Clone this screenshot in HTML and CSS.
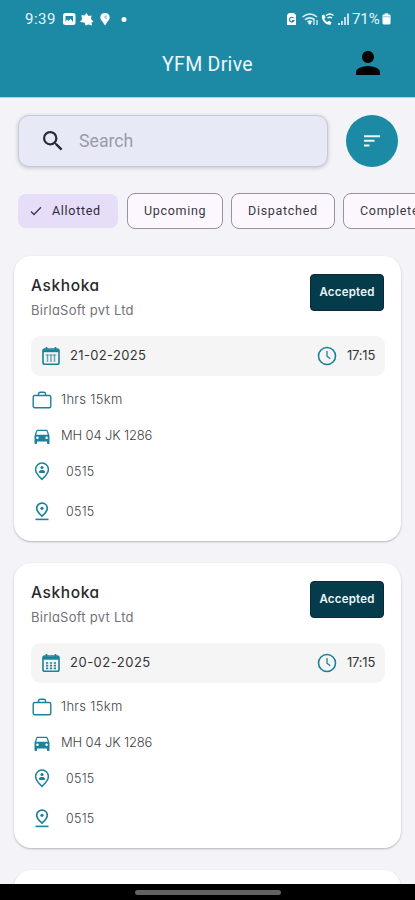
FILE: index.html
```html
<!DOCTYPE html>
<html lang="en">
<head>
<meta charset="utf-8">
<title>YFM Drive</title>
<link rel="stylesheet" href="styles.css">
</head>
<body>
<svg class="defs" aria-hidden="true">
  <symbol id="calendar" viewBox="0 0 18 18"><path d="M4.500 0v3M13.500 0v3" stroke="currentColor" stroke-width="1.700"/><rect x="1" y="2" width="16" height="15.200" rx="1.800" fill="none" stroke="currentColor" stroke-width="1.600"/><path d="M1 2.500h16v3.200H1z" fill="currentColor"/><path d="M4 9h10M4 11.700h10M4 14.400h10" stroke="currentColor" stroke-width="1.700" stroke-dasharray="2.200 1.700"/></symbol>
  <symbol id="calendar-bars" viewBox="0 0 18 18"><path d="M4.500 0v3M13.500 0v3" stroke="currentColor" stroke-width="1.700"/><rect x="1" y="2" width="16" height="15.200" rx="1.800" fill="none" stroke="currentColor" stroke-width="1.600"/><path d="M1 2.500h16v2.700H1z" fill="currentColor"/><path d="M5.500 7.500v7.500M9 7.500v7.500M12.500 7.500v7.500" stroke="currentColor" stroke-width="1.500" opacity=".65"/><path d="M3.500 8h11" stroke="currentColor" stroke-width="1" opacity=".65"/></symbol>
  <symbol id="clock" viewBox="0 0 20 20"><circle cx="10" cy="10" r="8.500" fill="none" stroke="currentColor" stroke-width="1.600"/><path d="M10 5v5.200l3.300 2.600" fill="none" stroke="currentColor" stroke-width="1.300"/></symbol>
  <symbol id="case" viewBox="0 0 20 18"><rect x="1.200" y="4.500" width="17.600" height="12.300" rx="1.500" fill="none" stroke="currentColor" stroke-width="1.400"/><path d="M6.500 4.500V3q0-1.700 1.700-1.700h3.600q1.700 0 1.700 1.700v1.500" fill="none" stroke="currentColor" stroke-width="1.400"/></symbol>
  <symbol id="car" viewBox="0 0 24 24"><path fill="currentColor" d="M18.920 5.010C18.720 4.420 18.160 4 17.500 4h-11c-.66 0-1.210.42-1.420 1.010L3 11v9c0 .55.450 1 1 1h1c.55 0 1-.45 1-1v-2h12v2c0 .55.450 1 1 1h1c.55 0 1-.45 1-1v-9l-2.080-5.990zM6.500 15c-.83 0-1.500-.67-1.500-1.500S5.670 12 6.500 12s1.500.67 1.500 1.500S7.330 15 6.500 15zm11 0c-.83 0-1.500-.67-1.500-1.500s.67-1.500 1.500-1.500 1.500.67 1.500 1.500-.67 1.500-1.500 1.500zM5 10l1.500-4.500h11L19 10H5z"/></symbol>
  <symbol id="pickup" viewBox="0 0 16 19"><path d="M8 1.100c3.700 0 6.400 2.900 6.400 6.500 0 3-2.200 6-6.400 9.800C3.800 13.600 1.600 10.600 1.600 7.600 1.600 4 4.300 1.100 8 1.100z" fill="none" stroke="currentColor" stroke-width="1.500"/><circle cx="8" cy="5.500" r="1.600" fill="currentColor"/><path d="M4.700 10.200c0-1.800 2.200-2.300 3.300-2.300s3.300.5 3.300 2.300C10.100 11.400 5.900 11.400 4.700 10.200z" fill="currentColor"/></symbol>
  <symbol id="drop" viewBox="0 0 16 19"><path d="M8 1.100c3 0 5.300 2.300 5.300 5.200 0 2.500-1.800 4.900-5.300 7.900-3.500-3-5.300-5.400-5.300-7.900C2.700 3.400 5 1.100 8 1.100z" fill="none" stroke="currentColor" stroke-width="1.700"/><circle cx="8" cy="6.300" r="1.600" fill="currentColor"/><path d="M1.500 17.400h13" stroke="currentColor" stroke-width="1.600"/></symbol>
</svg>
<div class="screen">
  <header class="header">
    <div class="status">
      <span class="time">9:39</span>
      <svg class="s-left" viewBox="0 0 68 16">
        <rect x="1" y="2" width="12.500" height="12" rx="2.500" fill="#fff"/><path d="M3.500 11V5h7.500v6L8.500 7.800 6.500 10 5 8.500z" fill="#1c8aa5"/>
        <path d="M18 11l2-2.500-.5-4.500 3 .5 2-2.500 2 3 3-.5-.5 3.500 2.500 2.500-2 1 .5 3-3.500-1-3 1-1-3z" fill="#fff"/>
        <path d="M43 2c3 0 4.700 2 4.700 4.600 0 2.200-1.700 3.200-2.700 5L43 14.500l-2-2.900c-1-1.800-2.700-2.800-2.700-5C38.300 4 40 2 43 2z" fill="#fff"/><path d="M45 5.200h-2v2h2" fill="none" stroke="#7bbccb"/>
        <circle cx="62" cy="8.500" r="2.500" fill="#fff"/>
      </svg>
      <svg class="s-right" viewBox="0 0 66 16">
        <path d="M3 2h5l2 2v10H1V4z" fill="#fff"/><path d="M7.500 7a2.300 2.300 0 1 0 .3 2.700H6" fill="none" stroke="#1c8aa5" stroke-width="1.200"/>
        <g fill="none" stroke="#dceff4" stroke-width="1.600"><path d="M16.500 6q7.500-6 14.500 0M19 8.700q5-3.700 9.500 0M21.500 11q2.400-1.700 4.500 0"/><path d="M28 8v6M31 14v-5" stroke-width="1.300"/></g><circle cx="23.800" cy="12.300" r="1.300" fill="#fff"/>
        <path d="M36 4.200l2-.7 1.600 3-1.300 1.300c.6 1.500 1.800 2.600 3.200 3.200l1.500-1.200 2.500 1.700-1 2.200C40 14.500 34.800 9 36 4.200z" fill="#fff"/><path d="M40 4.500q4-3 7.500 0M41.500 7q2.300-1.600 4.500 0" fill="none" stroke="#fff" stroke-width="1.400"/>
        <path d="M53 14v-2M56 14v-4M59 14V6M62 14V2.500" stroke="#bfe0e8" stroke-width="2"/>
      </svg>
      <span class="percent">71%</span>
      <svg class="battery" viewBox="0 0 10 13"><path d="M3 0h4v2H3z" fill="#cde6ec"/><rect x=".5" y="1.500" width="9" height="11" rx="1.500" fill="#fff"/><path d="M.8 4h8.400" stroke="#8cc3d0"/></svg>
    </div>
    <div class="titlebar">
      <h1>YFM Drive</h1>
      <svg class="person" viewBox="4 4 16 16"><path d="M12 12c2.210 0 4-1.790 4-4s-1.790-4-4-4-4 1.790-4 4 1.790 4 4 4zm0 2c-2.670 0-8 1.340-8 4v2h16v-2c0-2.660-5.330-4-8-4z"/></svg>
    </div>
  </header>
  <main>
    <div class="searchrow">
      <div class="search"><svg viewBox="3 3 18 18"><path d="M15.500 14h-.79l-.28-.27A6.470 6.470 0 0 0 16 9.500 6.500 6.500 0 1 0 9.500 16c1.610 0 3.090-.59 4.230-1.570l.27.28v.79l5 4.990L20.490 19l-4.990-5zm-6 0C7.010 14 5 11.990 5 9.500S7.010 5 9.500 5 14 7.010 14 9.500 11.990 14 9.500 14z"/></svg><span>Search</span></div>
      <div class="sort"><svg viewBox="0 0 16 12"><path d="M0 1.200h16M0 5.800h10.500M0 10.500h5.500" stroke="#eaf6f8" stroke-width="2.100"/></svg></div>
    </div>
    <div class="chips">
      <div class="chip active"><svg viewBox="0 0 12 10"><path d="M1 5.500l3 3L11 1.200" fill="none" stroke="#3d3750" stroke-width="1.300"/></svg><span>Allotted</span></div>
      <div class="chip upcoming">Upcoming</div>
      <div class="chip dispatched">Dispatched</div>
      <div class="chip completed">Completed</div>
    </div>
    <div class="cards">
      <article class="card">
        <div class="top"><div><h2>Askhoka</h2><p class="company">BirlaSoft pvt Ltd</p></div><div class="badge">Accepted</div></div>
        <div class="when"><svg class="cal"><use href="#calendar-bars"/></svg><span class="date">21-02-2025</span><svg class="clock"><use href="#clock"/></svg><span class="hour">17:15</span></div>
        <div class="details">
          <div class="row"><svg><use href="#case"/></svg><span class="plan">1hrs 15km</span></div>
          <div class="row"><svg class="car"><use href="#car"/></svg><span class="plate">MH 04 JK 1286</span></div>
          <div class="row place"><svg viewBox="0 0 20 19"><use href="#pickup" width="20" height="19"/></svg><span>0515</span></div>
          <div class="row place last"><svg viewBox="0 0 20 19"><use href="#drop" width="20" height="19"/></svg><span>0515</span></div>
        </div>
      </article>
      <article class="card">
        <div class="top"><div><h2>Askhoka</h2><p class="company">BirlaSoft pvt Ltd</p></div><div class="badge">Accepted</div></div>
        <div class="when"><svg class="cal"><use href="#calendar"/></svg><span class="date second">20-02-2025</span><svg class="clock"><use href="#clock"/></svg><span class="hour">17:15</span></div>
        <div class="details">
          <div class="row"><svg><use href="#case"/></svg><span class="plan">1hrs 15km</span></div>
          <div class="row"><svg class="car"><use href="#car"/></svg><span class="plate">MH 04 JK 1286</span></div>
          <div class="row place"><svg viewBox="0 0 20 19"><use href="#pickup" width="20" height="19"/></svg><span>0515</span></div>
          <div class="row place last"><svg viewBox="0 0 20 19"><use href="#drop" width="20" height="19"/></svg><span>0515</span></div>
        </div>
      </article>
      <div class="card next"></div>
    </div>
  </main>
  <footer><div class="handle"></div></footer>
</div>
</body>
</html>
```
FILE: styles.css
```css
* { box-sizing: border-box; }
body, h1, h2, p { margin: 0; }
body { background: #f3f3f8; font-family: Roboto, sans-serif; overflow: hidden; }
svg { display: block; flex: none; }
.defs { display: none; }
.screen { width: 415px; height: 900px; display: flex; flex-direction: column; overflow: hidden; }
.header { height: 98px; flex: none; background: #1c8aa5; border-bottom: 1px solid #a9d3e6; color: #fff; }
.status { height: 36px; padding: 1px 24px 0 25px; display: flex; align-items: center; color: #e6f5f8; font-size: 15px; }
.time { width: 32px; letter-spacing: .5px; white-space: nowrap; }
.s-left { width: 68px; height: 16px; margin-left: 5px; }
.s-right { width: 66px; height: 16px; margin-left: auto; }
.percent { width: 30px; margin-left: 0; white-space: nowrap; letter-spacing: -.1px; }
.battery { width: 9px; height: 12px; }
.titlebar { height: 56px; display: grid; grid-template-columns: 1fr auto 1fr; align-items: center; }
.titlebar h1 { grid-column: 2; font-size: 19.500px; font-weight: 400; letter-spacing: .3px; color: #ecf8fa; }
.person { width: 24px; height: 24px; justify-self: end; margin: 0 35px 3px 0; }
main { flex: 1; min-height: 0; overflow: hidden; padding-top: 17px; }
.searchrow { display: flex; gap: 18px; padding-left: 18px; }
.search { width: 310px; height: 52px; border-radius: 11px; background: #e7eaf6; border: 1px solid #c7cad5; box-shadow: 0 1px 4px #c2c3cc; display: flex; align-items: center; padding-left: 24px; gap: 16px; color: #9a9ca8; font-size: 17.700px; }
.search svg { width: 20px; height: 20px; fill: #272936; }
.sort { width: 52px; height: 52px; border-radius: 50%; background: #1c8aa5; display: grid; place-items: center; }
.sort svg { width: 16px; height: 12px; }
.chips { display: flex; gap: 8px; margin: 26px 0 0 18px; width: 397px; overflow: hidden; }
.chip { flex: none; height: 36px; display: flex; align-items: center; border: 1px solid #98939f; border-radius: 8px; background: #fcf6fe; color: #3c3942; font-size: 12.500px; letter-spacing: .7px; font-weight: 400; padding: 0 0 2px 16px; }
.active { width: 100px; height: 34px; margin: 1px 1px 0 0; padding-left: 12px; border: 0; background: #e6ddf8; gap: 10px; color: #302b38; }
.active svg { width: 12px; height: 10px; margin-top: 2px; }
.upcoming { width: 96px; }
.dispatched { width: 104px; }
.completed { width: 105px; }
.cards { display: flex; flex-direction: column; gap: 22px; padding: 27px 14px 0; }
.card { height: 285px; flex: none; background: #fff; border-radius: 17px; box-shadow: 0 1px 2px #b5b4b9; padding: 18px 17px 0; font-family: Inter, sans-serif; font-feature-settings: "cv11"; }
.top { height: 62px; display: flex; justify-content: space-between; }
.top h2 { height: 24px; line-height: 24px; font-size: 15.500px; font-weight: 500; letter-spacing: .6px; color: #29282c; }
.company { margin-top: 1px; line-height: 22px; font-size: 13px; color: #737278; letter-spacing: .25px; }
.badge { width: 74px; height: 37px; display: flex; justify-content: center; line-height: 34px; border: 1px solid #132538; border-radius: 4px; background: #043c4b; color: #edf4f5; font-size: 11.500px; font-weight: 600; letter-spacing: .2px; }
.when { height: 40px; width: 354px; border-radius: 9px; background: #f5f5f5; display: flex; align-items: center; padding: 0 9px 2px 11px; font-size: 13px; color: #353438; }
.cal, .clock, .row svg { color: #1c8199; }
.cal { width: 18px; height: 18px; margin-top: 2px; }
.date { margin-left: 10px; white-space: nowrap; letter-spacing: .35px; }
.date.second { letter-spacing: .5px; }
.clock { width: 20px; height: 20px; margin: 2px 10px 0 auto; }
.hour { width: 29px; white-space: nowrap; letter-spacing: -.2px; }
.details { padding-top: 5px; }
.row { display: flex; height: 36px; align-items: center; gap: 9px; padding-left: 1px; font-size: 13px; font-weight: 300; color: #424146; }
.row svg { width: 20px; height: 18px; margin-top: 1px; }
.row .car { width: 20px; height: 21px; margin-top: 3px; }
.plan { letter-spacing: .3px; }
.plate { letter-spacing: -.15px; }
.row.place { gap: 14px; font-size: 12.500px; letter-spacing: .25px; }
.row.place svg { height: 19px; }
.row.last { height: 44px; }
footer { height: 16px; flex: none; background: #000; display: flex; justify-content: center; align-items: center; }
.handle { width: 146px; height: 5px; border-radius: 3px; background: #626262; }
```
